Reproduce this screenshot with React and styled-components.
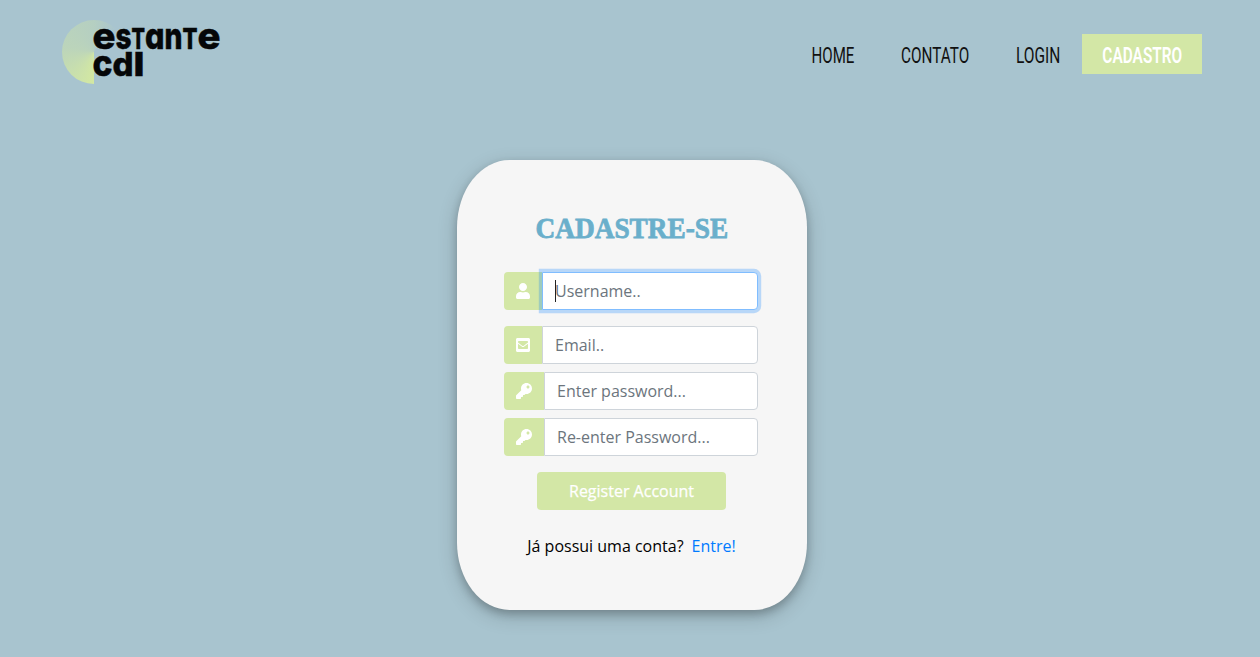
import React from "react";
import styled, { createGlobalStyle, css } from "styled-components";
import { FaUser, FaEnvelopeSquare, FaKey } from "react-icons/fa";

const GlobalStyle = createGlobalStyle`
  *, *::before, *::after { box-sizing: border-box; }
  body {
    margin: 0;
    background: #a8c4cf;
    color: #000;
    font: 400 16px/24px "Open Sans", sans-serif;
  }
`;

const Page = styled.div`
  min-height: 657px;
  overflow: hidden;
`;

const Header = styled.header`
  display: flex;
  justify-content: space-between;
  align-items: flex-start;
  height: 160px;
  padding: 20px 58px 0 62px;
`;

const Logo = styled.a`
  position: relative;
  width: 160px;
  height: 64px;
`;

const Moon = styled.span`
  display: block;
  width: 64px;
  height: 64px;
  border-radius: 50%;
  background: conic-gradient(from 180deg, #d3e8a2 0deg, rgba(211, 232, 162, 0.45) 100deg, rgba(211, 232, 162, 0.3) 180deg, rgba(211, 232, 162, 0) 225deg);
`;

const Wordmark = styled.svg`
  position: absolute;
  inset: 0;
  overflow: visible;
  font-family: Inter, sans-serif;
  font-weight: 800;
  font-feature-settings: "cv11";
  fill: #050708;
  stroke: #050708;
  stroke-width: 0.5px;
`;

const Nav = styled.nav`
  display: flex;
  padding-top: 14px;
`;

const NavLink = styled.a`
  display: flex;
  justify-content: center;
  align-items: center;
  width: ${(p) => p.$width}px;
  height: 40px;
  margin-right: ${(p) => p.$gap || 0}px;
  font: ${(p) => (p.$active ? 600 : 400)} 22.5px/40px Roboto, sans-serif;
  white-space: nowrap;
  color: ${(p) => (p.$active ? "#fff" : "#111")};
  background: ${(p) => (p.$active ? "#d3e7a6" : "transparent")};
`;

const NavLabel = styled.span`
  flex: none;
  padding-top: 1px;
  transform: scaleX(${(p) => p.$stretch});
`;

const Card = styled.main`
  display: flex;
  flex-direction: column;
  align-items: center;
  width: 350px;
  height: 450px;
  margin-left: 457px;
  padding: 48px 49px 0 47px;
  border-radius: 15%;
  background: #f6f6f6;
  box-shadow: 0 4px 8px rgba(0, 0, 0, 0.2), 0 6px 20px rgba(0, 0, 0, 0.19);
`;

const Title = styled.h1`
  margin: 0 0 24px;
  font: 700 30px/40px "Liberation Serif", serif;
  color: #6aafcb;
  white-space: nowrap;
  -webkit-text-stroke: 0.8px #6aafcb;
  transform: translateX(1px) scaleX(${(p) => p.$stretch});
`;

const Form = styled.form`
  display: flex;
  flex-direction: column;
  align-items: center;
  width: 254px;
`;

const Field = styled.label`
  position: relative;
  display: flex;
  width: 100%;
  height: 38px;
  margin-bottom: ${(p) => p.$gap}px;
`;

const FieldIcon = styled.span`
  display: flex;
  align-items: center;
  padding: 0 12px;
  border-radius: 4px 0 0 4px;
  background: #d3e7a6;
  color: #fff;
`;

const Input = styled.input`
  flex: 1;
  min-width: 0;
  height: 38px;
  padding: 6px 12px;
  border: 1px solid #ced4da;
  border-radius: 0 4px 4px 0;
  background: #fff;
  font: inherit;
  outline: 0;
  &::placeholder { color: #6c757d; opacity: 1; }
  ${(p) => p.$focused && css`
    border-color: #80bdff;
    box-shadow: 0 0 0 3.2px rgba(0, 123, 255, 0.25);
  `}
`;

const Caret = styled.span`
  position: absolute;
  left: 51px;
  top: 8px;
  width: 1px;
  height: 22px;
  background: #222;
`;

const Submit = styled.button`
  width: 189px;
  height: 38px;
  margin-right: -1px;
  padding: 0;
  border: 0;
  border-radius: 4px;
  background: #d3e7a6;
  color: #fff;
  font: 400 16px/24px "Open Sans", sans-serif;
  -webkit-text-stroke: 0.25px #fff;
`;

const Footer = styled.p`
  display: flex;
  gap: 8px;
  margin: 24px -1px 0 0;
  white-space: nowrap;
`;

const FooterLink = styled.a`
  color: #007bff;
`;

const fields = [
  { icon: FaUser, width: 14, type: "text", hint: "Username..", gap: 16, focused: true },
  { icon: FaEnvelopeSquare, width: 14, type: "text", hint: "Email..", gap: 8 },
  { icon: FaKey, width: 16, type: "password", hint: "Enter password...", gap: 8 },
  { icon: FaKey, width: 16, type: "password", hint: "Re-enter Password...", gap: 16 },
];

export default function App() {
  return (
    <Page>
      <GlobalStyle />
      <Header>
        <Logo>
          <Moon />
          <Wordmark width="160" height="64">
            <text y="28.5" fontSize="37">
              <tspan x="30.5" textLength="23" lengthAdjust="spacingAndGlyphs">e</tspan>
              <tspan x="53.5" textLength="16" lengthAdjust="spacingAndGlyphs">s</tspan>
              <tspan x="69.5" fontSize="28" textLength="13.5" lengthAdjust="spacingAndGlyphs">T</tspan>
              <tspan x="83" textLength="19.5" lengthAdjust="spacingAndGlyphs">a</tspan>
              <tspan x="102.5" textLength="18" lengthAdjust="spacingAndGlyphs">n</tspan>
              <tspan x="120.5" fontSize="28" textLength="15" lengthAdjust="spacingAndGlyphs">T</tspan>
              <tspan x="135.5" textLength="23" lengthAdjust="spacingAndGlyphs">e</tspan>
            </text>
            <text y="56" fontSize="37">
              <tspan x="30.5" textLength="20" lengthAdjust="spacingAndGlyphs">c</tspan>
              <tspan x="50.5" fontSize="32" textLength="21" lengthAdjust="spacingAndGlyphs">d</tspan>
              <tspan x="71.5" fontSize="32" textLength="11" lengthAdjust="spacingAndGlyphs">l</tspan>
            </text>
          </Wordmark>
        </Logo>
        <Nav>
          <NavLink $width={43} $gap={47}><NavLabel $stretch={0.67}>HOME</NavLabel></NavLink>
          <NavLink $width={68} $gap={47}><NavLabel $stretch={0.68}>CONTATO</NavLabel></NavLink>
          <NavLink $width={44} $gap={22}><NavLabel $stretch={0.69}>LOGIN</NavLabel></NavLink>
          <NavLink $width={120} $active><NavLabel $stretch={0.685}>CADASTRO</NavLabel></NavLink>
        </Nav>
      </Header>
      <Card>
        <Title $stretch={0.91}>CADASTRE-SE</Title>
        <Form>
          {fields.map(({ icon: Icon, width, type, hint, gap, focused }) => (
            <Field key={hint} $gap={gap}>
              <FieldIcon><Icon style={{ width, height: 16 }} /></FieldIcon>
              <Input type={type} placeholder={hint} $focused={focused} />
              {focused && <Caret />}
            </Field>
          ))}
          <Submit type="button">Register Account</Submit>
        </Form>
        <Footer>
          Já possui uma conta? <FooterLink>Entre!</FooterLink>
        </Footer>
      </Card>
    </Page>
  );
}
